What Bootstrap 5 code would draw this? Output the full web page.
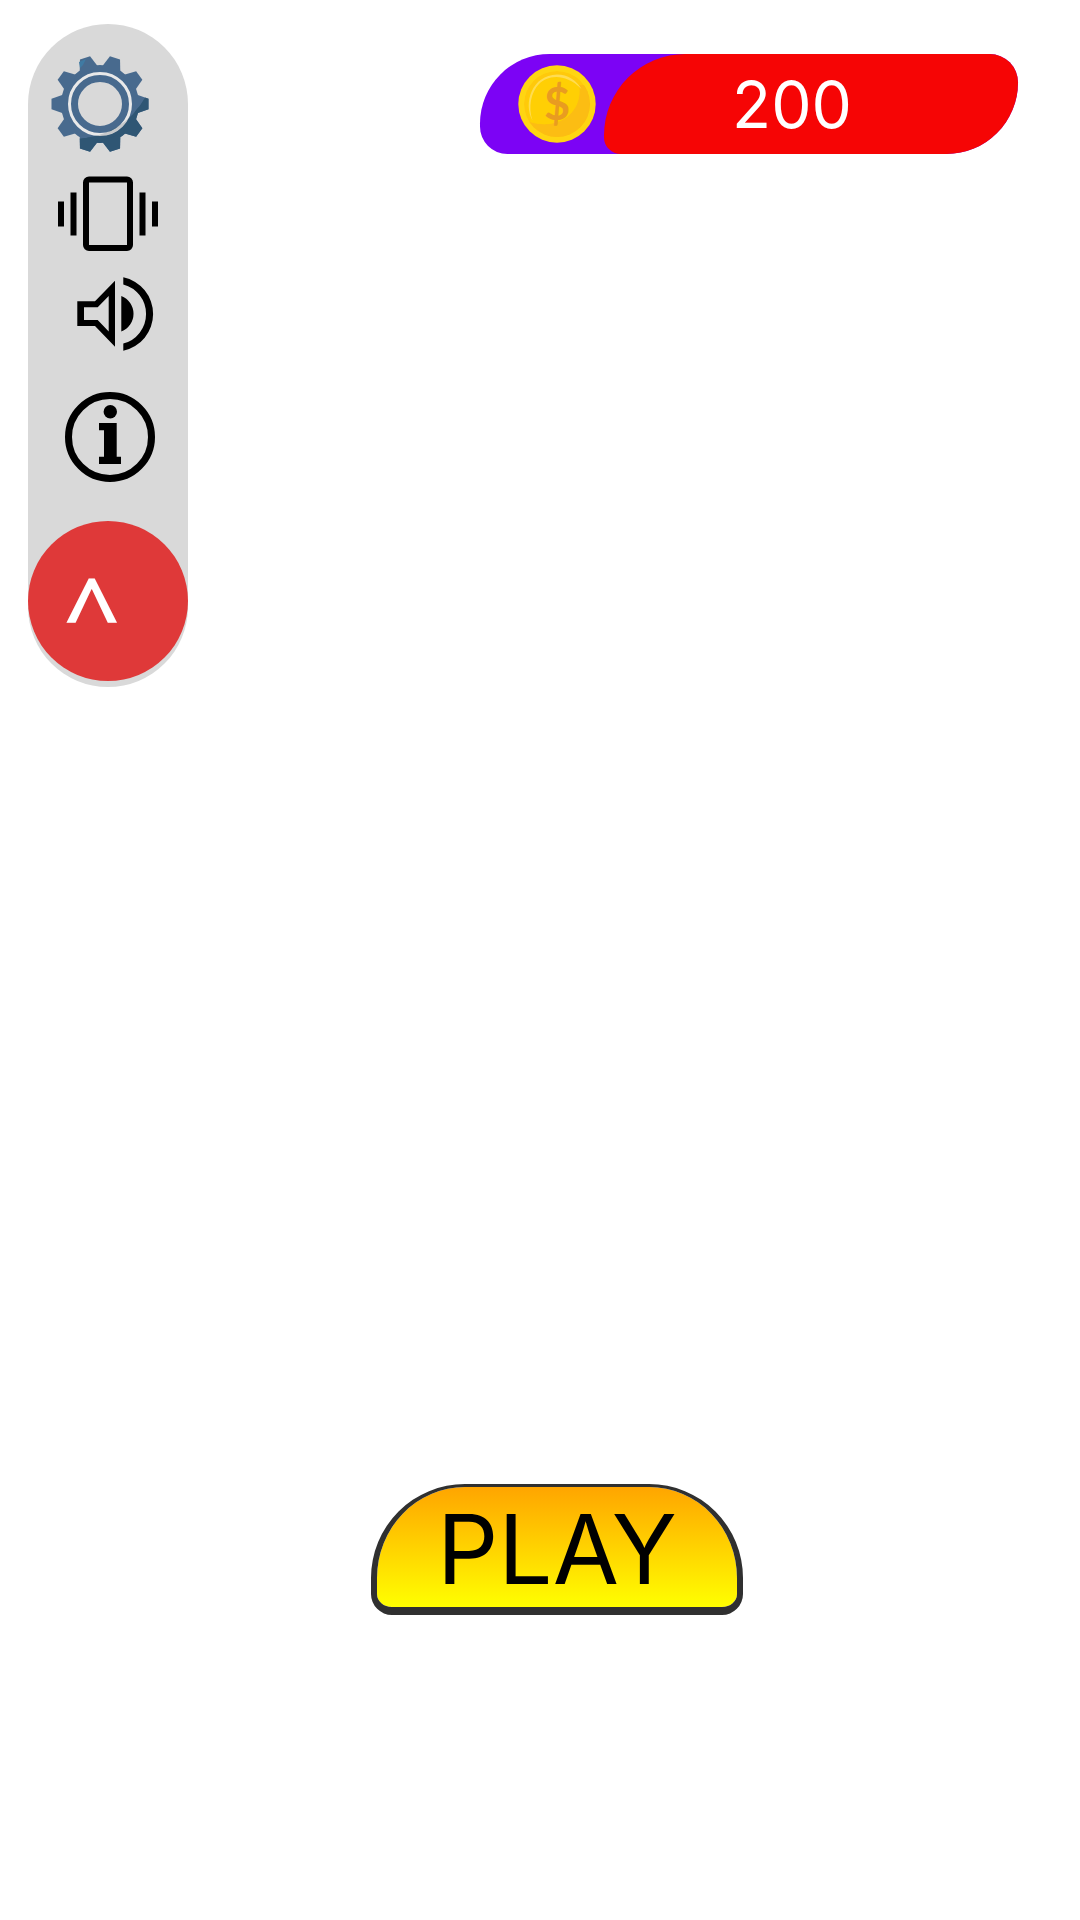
<!DOCTYPE html>
<html lang="en">
<head>
<meta charset="utf-8">
<meta name="viewport" content="width=device-width, initial-scale=1">
<title>Play</title>
<link href="https://cdn.jsdelivr.net/npm/bootstrap@5.3.0/dist/css/bootstrap.min.css" rel="stylesheet">
<style>
  body { font-family: Inter, sans-serif; background: #fff; }
  .screen-top { padding: 24px 62px 0 28px; }
  .side-menu { width: 160px; padding-bottom: 6px; border-radius: 80px; background: #d9d9d9; }
  .side-menu svg, .coin-slot svg { display: block; }
  .collapse-btn { width: 160px; height: 160px; padding: 2px 18px 0 0; background: #df3939; font-size: 96px; line-height: 158px; }
  .chevron { display: inline-block; width: 96px; line-height: 96px; transform: rotate(90deg); }
  .coin-bar { margin-top: 30px; width: 538px; height: 100px; border-radius: 71px 29px 73px 28px; background: #7c03f5; }
  .coin-slot { width: 124px; padding-left: 38px; }
  .coin-total { border-radius: 83px 29px 73px 17px; background: #f60505; font-size: 64px; line-height: 102px; height: 100px; padding-right: 38px; }
  .screen-bottom { padding-bottom: 305px; padding-left: 34px; }
  .play-btn {
    width: 372px; height: 131px; padding: 4px 0 0; color: #000;
    border: solid #303030; border-width: 3px 6px 8px;
    border-radius: 94px 94px 21px 21px;
    background: linear-gradient(#ffa500, #ff0) padding-box;
    font-size: 96px; line-height: 116px;
  }
</style>
<script src="https://cdn.jsdelivr.net/npm/bootstrap@5.3.0/dist/js/bootstrap.bundle.min.js" defer></script>
</head>
<body>
<div class="d-flex flex-column min-vh-100">
  <header class="screen-top d-flex justify-content-between align-items-start">
    <nav class="side-menu d-flex flex-column" aria-label="Options">
      <button type="button" class="border-0 bg-transparent p-0" aria-label="Settings">
        <svg width="160" height="137" viewBox="0 0 160 137">
          <defs>
            <path id="tooth" d="M-10-35-5.300-48.500H5.300L10-35Z"/>
            <g id="gear">
              <circle r="35.500" fill="none" stroke="currentColor" stroke-width="7"/>
              <circle r="25.500" fill="none" stroke="currentColor" stroke-width="7"/>
              <g fill="currentColor">
                <use href="#tooth" transform="rotate(18)"/><use href="#tooth" transform="rotate(54)"/>
                <use href="#tooth" transform="rotate(90)"/><use href="#tooth" transform="rotate(126)"/>
                <use href="#tooth" transform="rotate(162)"/><use href="#tooth" transform="rotate(198)"/>
                <use href="#tooth" transform="rotate(234)"/><use href="#tooth" transform="rotate(270)"/>
                <use href="#tooth" transform="rotate(306)"/><use href="#tooth" transform="rotate(342)"/>
              </g>
            </g>
            <clipPath id="shade"><path d="M-24 35Q24 32 46-8H60V60H-24Z"/></clipPath>
          </defs>
          <g transform="translate(72 80)">
            <circle r="30.500" fill="none" stroke="#e9e9e9" stroke-width="4"/>
            <use href="#gear" color="#486a8e"/>
            <g clip-path="url(#shade)">
              <circle r="30.500" fill="none" stroke="#c6c9cb" stroke-width="4"/>
              <use href="#gear" color="#2f5674"/>
            </g>
            <path d="M-21-42-14-45-17-39-20-36Z" fill="#3f7aa3"/>
          </g>
        </svg>
      </button>
      <button type="button" class="border-0 bg-transparent p-0" aria-label="Vibration">
        <svg width="160" height="104" viewBox="0 0 160 104">
          <rect x="58" y="18.500" width="44" height="68.500" rx="3" fill="none" stroke="#000" stroke-width="6"/>
          <path d="M30 40.500h6v25h-6zM42.500 31.500h6v43h-6zM111.500 31.500h6v43h-6zM124 40.500h6v25h-6z"/>
        </svg>
      </button>
      <button type="button" class="border-0 bg-transparent p-0" aria-label="Sound">
        <svg width="160" height="96" viewBox="0 0 160 96">
          <path fill-rule="evenodd" d="M49.300 36.300H67L87 15.700V81.700L67 61H49.300ZM56 42.300V55H69.700L80.700 66.500V31L69.700 42.300Z"/>
          <path d="M93.300 31A19 19 0 0 1 93.300 66.500ZM95.300 12.300A37.500 37.500 0 0 1 95.300 85.700V78.500A30.500 30.500 0 0 0 95.300 19.500Z"/>
        </svg>
      </button>
      <button type="button" class="border-0 bg-transparent p-0" aria-label="Information">
        <svg width="160" height="160" viewBox="0 0 160 160">
          <circle cx="82" cy="76" r="41.500" fill="none" stroke="#000" stroke-width="7"/>
          <circle cx="82.300" cy="50.700" r="6.700"/>
          <path d="M71 62H88.700V95.700H93V103H71V95.700H76V69.300H71Z"/>
        </svg>
      </button>
      <button type="button" class="collapse-btn border-0 rounded-circle text-white text-center" aria-label="Collapse menu"><span class="chevron">&lt;</span></button>
    </nav>
    <div class="coin-bar d-flex">
      <div class="coin-slot d-flex align-items-center">
        <svg width="78" height="78" viewBox="0 0 78 78" role="img" aria-label="Coins">
          <defs><clipPath id="face"><circle cx="39" cy="39" r="33"/></clipPath></defs>
          <circle cx="39" cy="39" r="38.700" fill="#ffd512"/>
          <g clip-path="url(#face)">
            <circle cx="39" cy="39" r="33" fill="#ffc90b"/>
            <path d="M61 20C66 46 42 66 11 57L8 80H80V20Z" fill="#fcbd13"/>
            <path d="M61 20C65 46 42 66 13 57C4 38 12 12 37 12C48 12 56 15 61 20Z" fill="#ffcf04"/>
          </g>
          <path d="M14.500 55.500C5 38 14 10 39 9.500C50 9.500 58 15 63.500 24C46 7 29 11 21 19C13 27 10 42 14.500 55.500Z" fill="#ffdc52"/>
          <text x="39" y="55" text-anchor="middle" font-family="Lato" font-weight="700" font-size="45" fill="#e99c20">$</text>
        </svg>
      </div>
      <div class="coin-total flex-grow-1 text-white text-center">200</div>
    </div>
  </header>
  <main class="screen-bottom mt-auto d-flex justify-content-center">
    <button type="button" class="play-btn">PLAY</button>
  </main>
</div>
</body>
</html>
